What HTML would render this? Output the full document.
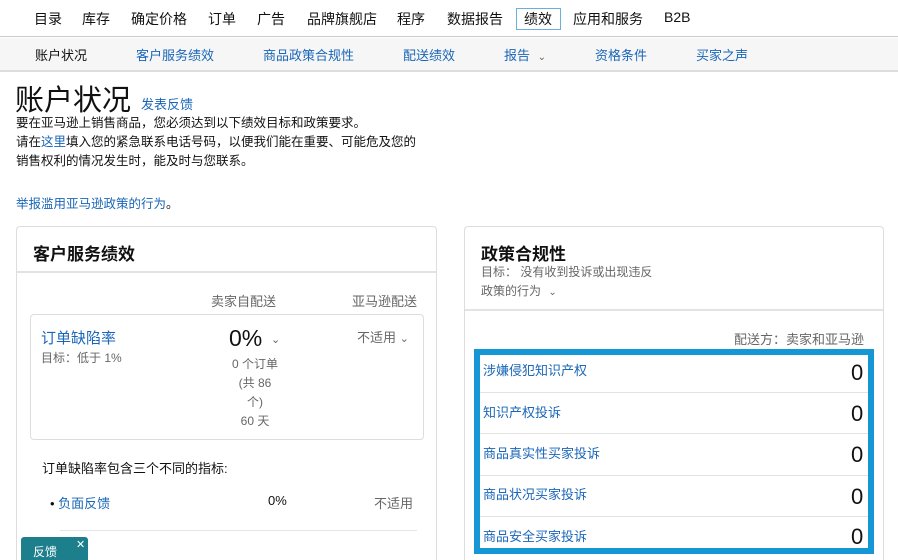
<!DOCTYPE html>
<html><head><meta charset="utf-8"><style>
*{margin:0;padding:0;box-sizing:border-box}
html{width:898px;height:560px;overflow:hidden}
body{width:898px;height:560px;overflow:hidden;background:#fff;font-family:"Liberation Sans","Noto Sans CJK SC",sans-serif;color:#111;position:relative}
.a{position:absolute;white-space:nowrap}
.b{color:#1a66b8}
.g{color:#666}
</style></head><body>
<div class="a" style="left:0;top:0;width:898px;height:37px;border-bottom:1px solid #ccc"></div>
<div class="a" style="left:0;top:38px;width:898px;height:34px;background:#f6f6f6;border-bottom:2px solid #ddd"></div>
<div class="a" style="top:9px;font-size:14px;left:34px">目录</div>
<div class="a" style="top:9px;font-size:14px;left:82px">库存</div>
<div class="a" style="top:9px;font-size:14px;left:131px">确定价格</div>
<div class="a" style="top:9px;font-size:14px;left:208px">订单</div>
<div class="a" style="top:9px;font-size:14px;left:257px">广告</div>
<div class="a" style="top:9px;font-size:14px;left:307px">品牌旗舰店</div>
<div class="a" style="top:9px;font-size:14px;left:397px">程序</div>
<div class="a" style="top:9px;font-size:14px;left:447px">数据报告</div>
<div class="a" style="top:8px;left:516px;width:45px;height:22px;border:1px solid #6ab0d8"></div>
<div class="a" style="top:9px;font-size:14px;left:524px">绩效</div>
<div class="a" style="top:9px;font-size:14px;left:573px">应用和服务</div>
<div class="a" style="top:9px;font-size:14px;left:664px">B2B</div>
<div class="a" style="top:45px;font-size:13px;left:35px">账户状况</div>
<div class="a b" style="top:45px;font-size:13px;left:136px">客户服务绩效</div>
<div class="a b" style="top:45px;font-size:13px;left:263px">商品政策合规性</div>
<div class="a b" style="top:45px;font-size:13px;left:403px">配送绩效</div>
<div class="a b" style="top:45px;font-size:13px;left:504px">报告 <span style="font-size:10px;color:#666;margin-left:4px">⌄</span></div>
<div class="a b" style="top:45px;font-size:13px;left:595px">资格条件</div>
<div class="a b" style="top:45px;font-size:13px;left:696px">买家之声</div>
<div class="a" style="top:77px;left:15px;font-size:29px">账户状况</div>
<div class="a b" style="top:94px;left:141px;font-size:13px">发表反馈</div>
<div class="a" style="top:114px;left:16px;font-size:12.5px;line-height:19px">要在亚马逊上销售商品，您必须达到以下绩效目标和政策要求。<br>请在<span class="b">这里</span>填入您的紧急联系电话号码，以便我们能在重要、可能危及您的<br>销售权利的情况发生时，能及时与您联系。</div>
<div class="a b" style="top:193px;left:16px;font-size:12.5px">举报滥用亚马逊政策的行为<span style="color:#111">。</span></div>

<div class="a" style="left:16px;top:226px;width:421px;height:334px;border:1px solid #ddd;border-bottom:none;border-radius:4px 4px 0 0"></div>
<div class="a" style="left:17px;top:271px;width:419px;border-top:2px solid #e3e3e3"></div>
<div class="a" style="left:33px;top:240px;font-size:17px;font-weight:bold">客户服务绩效</div>
<div class="a g" style="left:211px;top:291px;font-size:13px">卖家自配送</div>
<div class="a g" style="left:352px;top:291px;font-size:13px">亚马逊配送</div>
<div class="a" style="left:30px;top:314px;width:394px;height:126px;border:1px solid #ddd;border-radius:4px"></div>
<div class="a b" style="left:41px;top:327px;font-size:15px">订单缺陷率</div>
<div class="a g" style="left:41px;top:349px;font-size:12px">目标：低于 1%</div>
<div class="a" style="left:229px;top:325px;font-size:23px">0%</div>
<div class="a g" style="left:271px;top:333px;font-size:11px">⌄</div>
<div class="a g" style="left:231px;top:355px;font-size:12px;line-height:19px;text-align:center;width:48px;white-space:normal">0 个订单<br>(共 86<br>个)<br>60 天</div>
<div class="a g" style="left:357px;top:327px;font-size:13px">不适用 <span style="font-size:11px">⌄</span></div>
<div class="a" style="left:42px;top:458px;font-size:13px">订单缺陷率包含三个不同的指标:</div>
<div class="a" style="left:50px;top:493px;font-size:13px">• <span class="b">负面反馈</span></div>
<div class="a" style="left:268px;top:493px;font-size:13px">0%</div>
<div class="a g" style="left:374px;top:493px;font-size:13px">不适用</div>
<div class="a" style="left:60px;top:530px;width:357px;border-top:1px solid #e5e5e5"></div>
<div class="a" style="left:21px;top:537px;width:67px;height:23px;background:#1d7f8c;border-radius:3px 3px 0 0;color:#fff;font-size:12px;padding:6px 0 0 12px">反馈<span style="position:absolute;left:55px;top:1px;font-size:11px">✕</span></div>

<div class="a" style="left:464px;top:226px;width:420px;height:334px;border:1px solid #ddd;border-bottom:none;border-radius:4px 4px 0 0"></div>
<div class="a" style="left:465px;top:309px;width:418px;border-top:2px solid #e3e3e3"></div>
<div class="a" style="left:481px;top:240px;font-size:17px;font-weight:bold">政策合规性</div>
<div class="a g" style="left:481px;top:263px;font-size:12px">目标： 没有收到投诉或出现违反</div>
<div class="a g" style="left:481px;top:282px;font-size:12px">政策的行为 <span style="font-size:10px;margin-left:4px">⌄</span></div>
<div class="a g" style="left:734px;top:329px;font-size:13px">配送方：卖家和亚马逊</div>
<div class="a" style="left:474px;top:349px;width:400px;height:205px;border:6px solid #1597d6"></div>
<div class="a" style="left:480px;top:392px;width:388px;border-top:1px solid #e3e3e3"></div>
<div class="a" style="left:480px;top:433px;width:388px;border-top:1px solid #e3e3e3"></div>
<div class="a" style="left:480px;top:475px;width:388px;border-top:1px solid #e3e3e3"></div>
<div class="a" style="left:480px;top:516px;width:388px;border-top:1px solid #e3e3e3"></div>
<div class="a b" style="left:483px;top:360px;font-size:13px">涉嫌侵犯知识产权</div>
<div class="a b" style="left:483px;top:402px;font-size:13px">知识产权投诉</div>
<div class="a b" style="left:483px;top:443px;font-size:13px">商品真实性买家投诉</div>
<div class="a b" style="left:483px;top:484px;font-size:13px">商品状况买家投诉</div>
<div class="a b" style="left:483px;top:526px;font-size:13px">商品安全买家投诉</div>
<div class="a" style="left:851px;top:360px;font-size:22px">0</div>
<div class="a" style="left:851px;top:401px;font-size:22px">0</div>
<div class="a" style="left:851px;top:442px;font-size:22px">0</div>
<div class="a" style="left:851px;top:484px;font-size:22px">0</div>
<div class="a" style="left:851px;top:524px;font-size:22px">0</div>
</body></html>
